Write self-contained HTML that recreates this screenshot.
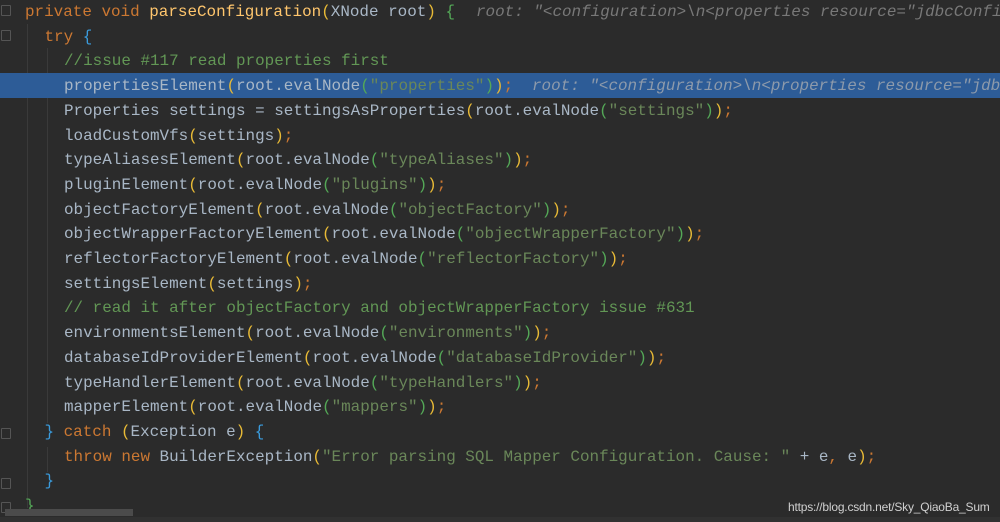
<!DOCTYPE html>
<html><head><meta charset="utf-8"><style>
html,body{margin:0;padding:0;}
body{width:1000px;height:522px;background:#2b2b2b;position:relative;overflow:hidden;font-family:"Liberation Mono",monospace;}
.l{position:absolute;left:0;width:1000px;height:24.7px;line-height:24.7px;font-size:15.93px;color:#a9b7c6;white-space:pre;overflow:hidden;}
.hl{background:#2d5c97;}
.k{color:#cc7832}.m{color:#ffc66d}.s{color:#6a8759}.c{color:#629755}
.y{color:#e8ba36}.g{color:#54a857}.b{color:#3a9bdc}.o{color:#cc7832}
.h{position:absolute;color:#787878;font-style:italic;}
.t{position:absolute;}
.guide{position:absolute;width:1px;background:#3a3a3a;}
.fold{position:absolute;left:1px;width:8px;height:9px;border:1px solid #555;border-radius:1px;}
</style></head><body>
<div class="guide" style="left:27px;top:24px;height:484px"></div>
<div class="guide" style="left:47px;top:48px;height:375px"></div>
<div class="guide" style="left:47px;top:447px;height:25px"></div>
<div class="fold" style="top:5px"></div>
<div class="fold" style="top:30px"></div>
<div class="fold" style="top:428px"></div>
<div class="fold" style="top:478px"></div>
<div class="fold" style="top:502px"></div>

<div class="l" style="top:0px"><span class="t" style="left:25px"><span class="k">private void </span><span class="m">parseConfiguration</span><span class="y">(</span>XNode root<span class="y">)</span> <span class="g">{</span></span><span class="h" style="left:476px">root: "&lt;configuration&gt;\n&lt;properties resource="jdbcConfig.properties"&gt;</span></div>
<div class="l" style="top:24.7px"><span class="t" style="left:44.5px"><span class="k">try </span><span class="b">{</span></span></div>
<div class="l" style="top:49.4px"><span class="t" style="left:64px"><span class="c">//issue #117 read properties first</span></span></div>
<div class="l hl" style="top:73px"><span class="t" style="left:64px;top:1px">propertiesElement<span class="y">(</span>root.evalNode<span class="g">(</span><span class="s">"properties"</span><span class="g">)</span><span class="y">)</span><span class="o">;</span></span><span class="h" style="left:532px;top:1px;color:#8d9aab">root: "&lt;configuration&gt;\n&lt;properties resource="jdbcConfig.properties"&gt;</span></div>
<div class="l" style="top:98.8px"><span class="t" style="left:64px">Properties settings = settingsAsProperties<span class="y">(</span>root.evalNode<span class="g">(</span><span class="s">"settings"</span><span class="g">)</span><span class="y">)</span><span class="o">;</span></span></div>
<div class="l" style="top:123.5px"><span class="t" style="left:64px">loadCustomVfs<span class="y">(</span>settings<span class="y">)</span><span class="o">;</span></span></div>
<div class="l" style="top:148.2px"><span class="t" style="left:64px">typeAliasesElement<span class="y">(</span>root.evalNode<span class="g">(</span><span class="s">"typeAliases"</span><span class="g">)</span><span class="y">)</span><span class="o">;</span></span></div>
<div class="l" style="top:172.9px"><span class="t" style="left:64px">pluginElement<span class="y">(</span>root.evalNode<span class="g">(</span><span class="s">"plugins"</span><span class="g">)</span><span class="y">)</span><span class="o">;</span></span></div>
<div class="l" style="top:197.6px"><span class="t" style="left:64px">objectFactoryElement<span class="y">(</span>root.evalNode<span class="g">(</span><span class="s">"objectFactory"</span><span class="g">)</span><span class="y">)</span><span class="o">;</span></span></div>
<div class="l" style="top:222.3px"><span class="t" style="left:64px">objectWrapperFactoryElement<span class="y">(</span>root.evalNode<span class="g">(</span><span class="s">"objectWrapperFactory"</span><span class="g">)</span><span class="y">)</span><span class="o">;</span></span></div>
<div class="l" style="top:247px"><span class="t" style="left:64px">reflectorFactoryElement<span class="y">(</span>root.evalNode<span class="g">(</span><span class="s">"reflectorFactory"</span><span class="g">)</span><span class="y">)</span><span class="o">;</span></span></div>
<div class="l" style="top:271.7px"><span class="t" style="left:64px">settingsElement<span class="y">(</span>settings<span class="y">)</span><span class="o">;</span></span></div>
<div class="l" style="top:296.4px"><span class="t" style="left:64px"><span class="c">// read it after objectFactory and objectWrapperFactory issue #631</span></span></div>
<div class="l" style="top:321.1px"><span class="t" style="left:64px">environmentsElement<span class="y">(</span>root.evalNode<span class="g">(</span><span class="s">"environments"</span><span class="g">)</span><span class="y">)</span><span class="o">;</span></span></div>
<div class="l" style="top:345.8px"><span class="t" style="left:64px">databaseIdProviderElement<span class="y">(</span>root.evalNode<span class="g">(</span><span class="s">"databaseIdProvider"</span><span class="g">)</span><span class="y">)</span><span class="o">;</span></span></div>
<div class="l" style="top:370.5px"><span class="t" style="left:64px">typeHandlerElement<span class="y">(</span>root.evalNode<span class="g">(</span><span class="s">"typeHandlers"</span><span class="g">)</span><span class="y">)</span><span class="o">;</span></span></div>
<div class="l" style="top:395.2px"><span class="t" style="left:64px">mapperElement<span class="y">(</span>root.evalNode<span class="g">(</span><span class="s">"mappers"</span><span class="g">)</span><span class="y">)</span><span class="o">;</span></span></div>
<div class="l" style="top:419.9px"><span class="t" style="left:44.5px"><span class="b">}</span> <span class="k">catch </span><span class="y">(</span>Exception e<span class="y">)</span> <span class="b">{</span></span></div>
<div class="l" style="top:444.6px"><span class="t" style="left:64px"><span class="k">throw new </span>BuilderException<span class="y">(</span><span class="s">"Error parsing SQL Mapper Configuration. Cause: "</span> + e<span class="o">, </span>e<span class="y">)</span><span class="o">;</span></span></div>
<div class="l" style="top:469.3px"><span class="t" style="left:44.5px"><span class="b">}</span></span></div>
<div class="l" style="top:494px;height:15px"><span class="t" style="left:25px"><span class="g">}</span></span></div>

<div style="position:absolute;left:5px;top:509px;width:128px;height:7px;background:#4b4b4b"></div>
<div style="position:absolute;left:0;top:517px;width:1000px;height:5px;background:#313131"></div>
<div style="position:absolute;left:788px;top:500px;font-family:'Liberation Sans',sans-serif;font-size:12px;color:#d0d0d0;letter-spacing:-0.2px">https://blog.csdn.net/Sky_QiaoBa_Sum</div>
</body></html>
